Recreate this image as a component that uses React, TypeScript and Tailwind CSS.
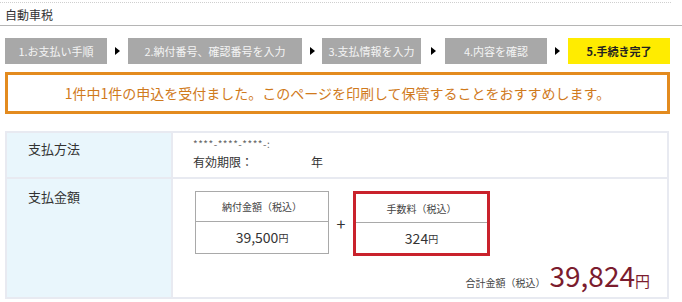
import React from "react";

const font = { fontFamily: '"Noto Sans CJK JP", "Noto Sans", sans-serif' };

function Arrow({ w }: { w: string }) {
  return (
    <div className={`${w} flex items-center justify-center`}>
      <div className="w-0 h-0 border-y-[4px] border-y-transparent border-l-[5px] border-l-black" />
    </div>
  );
}

function Step({ w, label, active }: { w: string; label: string; active?: boolean }) {
  return (
    <div
      className={`${w} h-[26px] flex items-center justify-center text-[11px] ${
        active ? "bg-[#ffec00] text-[#222] font-bold" : "bg-[#a8a8a8] text-[#f4f4f4]"
      }`}
    >
      {label}
    </div>
  );
}

export default function App() {
  return (
    <div className="w-[682px] h-[302px] bg-white overflow-hidden text-[#333]" style={font}>
      <div className="pt-[2px]">
        <div className="w-[671px] border-t border-dotted border-[#cfcfcf]" />
        <div className="h-[23px] border-b border-[#b5b5b5] pl-[5px] text-[12px] leading-[23px] text-[#333]">
          自動車税
        </div>
      </div>

      <div className="flex pl-[5px] mt-[12px]">
        <Step w="w-[102px]" label="1.お支払い手順" />
        <Arrow w="w-[21px]" />
        <Step w="w-[174px]" label="2.納付番号、確認番号を入力" />
        <Arrow w="w-[20px]" />
        <Step w="w-[99px]" label="3.支払情報を入力" />
        <Arrow w="w-[24px]" />
        <Step w="w-[102px]" label="4.内容を確認" />
        <Arrow w="w-[21px]" />
        <Step w="w-[102px]" label="5.手続き完了" active />
      </div>

      <div className="ml-[5px] w-[665px] mt-[8px] h-[42px] border-[3px] border-[#e38b1f] flex items-center justify-center text-[14px] text-[#d07a1c]">
        1件中1件の申込を受付ました。このページを印刷して保管することをおすすめします。
      </div>

      <div className="ml-[5px] w-[664px] mt-[17px] border-2 border-[#e8eaf1] text-[13px]">
        <div className="flex h-[46px] border-b-2 border-[#e8eaf1]">
          <div className="w-[166px] bg-[#e9f6fc] pl-[21px] pt-[6px] border-r-2 border-[#e8eaf1]">支払方法</div>
          <div className="flex-1 pl-[20px] pt-[5px]">
            <div className="text-[10px] leading-[12px] text-[#666] tracking-[0.5px]">****-****-****-:</div>
            <div className="text-[12px] leading-[18px] mt-[3px] flex">
              <span className="w-[118px]">有効期限：</span>
              <span>年</span>
            </div>
          </div>
        </div>
        <div className="flex h-[118px]">
          <div className="w-[166px] bg-[#e9f6fc] pl-[21px] pt-[8px] border-r-2 border-[#e8eaf1]">支払金額</div>
          <div className="flex-1 relative">
            <div className="flex items-start pl-[22px] pt-[12px]">
              <div className="w-[134px] h-[63px] border border-[#a9a9a9] flex flex-col">
                <div className="h-[30px] border-b border-[#a9a9a9] flex items-center justify-center text-[10px] text-[#444]">
                  納付金額（税込）
                </div>
                <div className="flex-1 flex items-center justify-center text-[14px] text-[#333]">
                  39,500<span className="text-[10px]">円</span>
                </div>
              </div>
              <div className="w-[24px] pt-[20px] text-center text-[16px] text-[#333]">+</div>
              <div className="w-[137px] h-[65px] border-[3px] border-[#c9222c] flex flex-col">
                <div className="h-[29px] border-b border-[#a9a9a9] flex items-center justify-center text-[10px] text-[#444]">
                  手数料（税込）
                </div>
                <div className="flex-1 flex items-center justify-center text-[14px] text-[#333]">
                  324<span className="text-[10px]">円</span>
                </div>
              </div>
            </div>
            <div className="flex items-baseline justify-end pr-[17px] mt-[4px]">
              <span className="text-[10px] text-[#444] mr-[4px]">合計金額（税込）</span>
              <span className="text-[28px] leading-[30px] text-[#7b1c2e]">39,824</span>
              <span className="text-[15px] text-[#7b1c2e]">円</span>
            </div>
          </div>
        </div>
      </div>
    </div>
  );
}
